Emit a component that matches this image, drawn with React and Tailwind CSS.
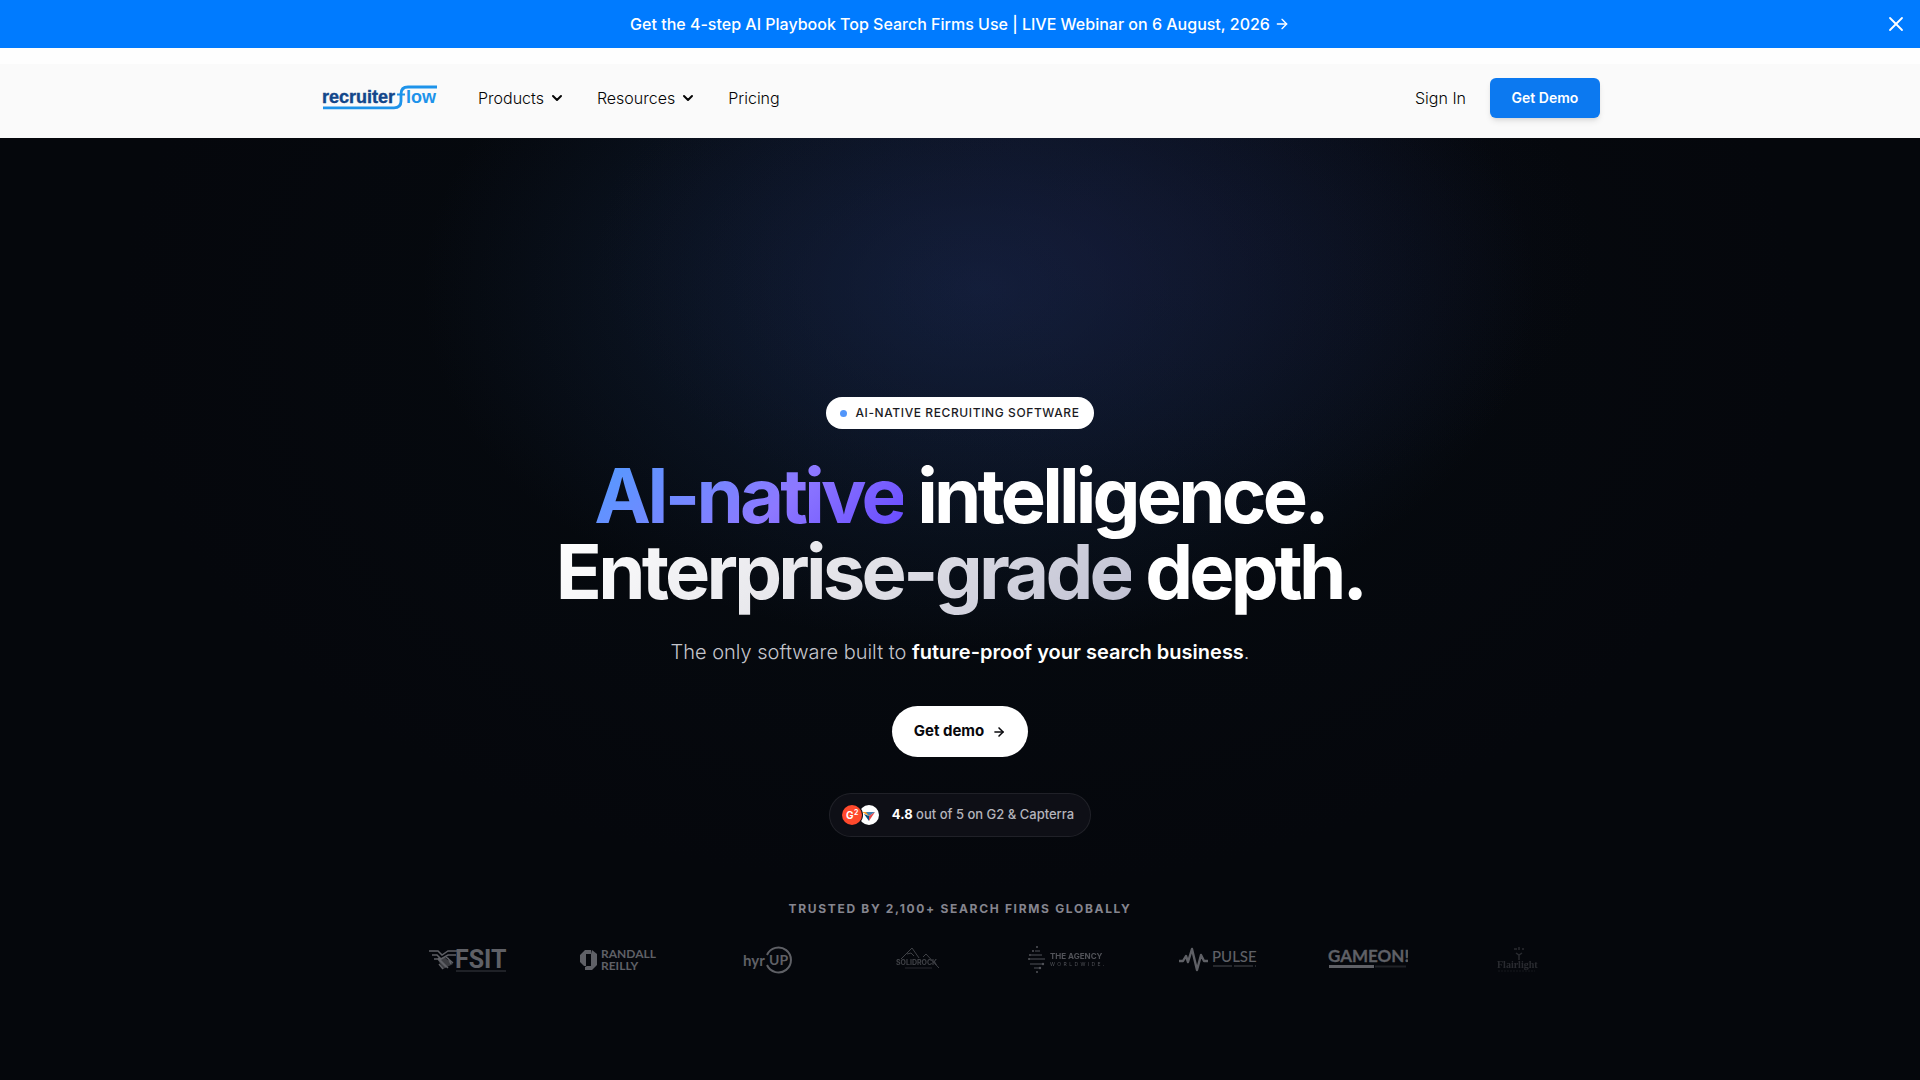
import React from 'react';
import { ArrowRight, ChevronDown, X } from 'lucide-react';

const navItems = [
  { label: 'Products', menu: true },
  { label: 'Resources', menu: true },
  { label: 'Pricing', menu: false },
];

const BrandLogo = () => (
  <svg width="116" height="26" viewBox="0 0 116 26" aria-hidden="true">
    <text x="0" y="18" className="font-['Liberation_Sans',sans-serif] text-[18px] font-bold" fill="#12468a" stroke="#12468a" strokeWidth=".4">recruiter</text>
    <path d="M1 22.800H72Q79 22.800 79 16V9Q79 2 86 2H115" fill="none" stroke="#1d93ea" strokeWidth="2.8" />
    <path d="M75 9.500H83" stroke="#1d93ea" strokeWidth="2" />
    <text x="84" y="18" className="font-['Liberation_Sans',sans-serif] text-[18px] font-bold" fill="#1d93ea">low</text>
  </svg>
);

const FsitLogo = () => (
  <svg width="78" height="28" viewBox="0 0 78 28" fill="currentColor">
    <path d="M0 5H9L13 9L19 5H28M3 9H8L12 13L19 9H27M5 13H9L17 21M9 12L19 22M16 10L24 17M19 12L22 18M10 18L14 23" fill="none" stroke="currentColor" strokeWidth="1.5" />
    <path d="M9 14L15 11L24 18L18 21L14 23Z" opacity=".6" />
    <text x="26" y="22" className="text-[25px] font-bold font-['Roboto',sans-serif]">FSIT</text>
    <path d="M27 25H77" stroke="currentColor" strokeWidth="1" opacity=".6" />
  </svg>
);

const RandallLogo = () => (
  <svg width="78" height="28" viewBox="0 0 78 28" fill="currentColor">
    <path d="M6 4H12V8H7V20H5L1 16V9Z" />
    <path d="M13 4L18 8V19L13 24H6V21L8 20H12V8Z" />
    <text x="22" y="12" className="text-[12px] font-bold font-['Lato',sans-serif]">RANDALL</text>
    <text x="22" y="24" className="text-[12px] font-bold font-['Lato',sans-serif]">REILLY</text>
  </svg>
);

const HyrupLogo = () => (
  <svg width="50" height="28" viewBox="0 0 50 28" fill="currentColor">
    <text x="0" y="20" className="text-[15px] font-bold font-['Lato',sans-serif]">hyr</text>
    <path d="M24 9A12.5 12.5 0 1 1 24 19" fill="none" stroke="currentColor" strokeWidth="2" />
    <text x="26" y="19" className="text-[14px] font-bold font-['Lato',sans-serif]">UP</text>
  </svg>
);

const SolidRockLogo = () => (
  <svg width="44" height="28" viewBox="0 0 44 28" fill="currentColor" opacity=".65">
    <path d="M5 13L16 2L23 12M27 11L30 8L43 22M11 8L15 7L18 10" fill="none" stroke="currentColor" strokeWidth="1" />
    <text x="0" y="19" className="text-[7px] font-bold font-['Inter',sans-serif]">SOLIDROCK</text>
    <path d="M9 22H36" stroke="currentColor" opacity=".6" />
  </svg>
);

const AgencyLogo = () => (
  <svg width="80" height="28" viewBox="0 0 80 28" fill="currentColor" opacity=".85">
    <path d="M7 5H12M3 9H14M1 13H17M2 18H15M6 22H12" stroke="currentColor" strokeWidth="1" />
    <circle cx="9" cy="1" r="1" />
    <circle cx="5" cy="5" r="1" />
    <circle cx="2" cy="9" r="1" />
    <circle cx="1" cy="13" r="1" />
    <circle cx="15" cy="18" r="1.2" />
    <circle cx="12" cy="22" r="1.2" />
    <circle cx="9" cy="26" r="1" />
    <text x="22" y="13" className="text-[8px] font-bold font-['Inter',sans-serif]">THE AGENCY</text>
    <text x="22" y="20" className="text-[5px] tracking-widest font-['Inter',sans-serif]">W O R L D W I D E .</text>
  </svg>
);

const PulseLogo = () => (
  <svg width="78" height="28" viewBox="0 0 78 28" fill="currentColor">
    <path d="M0 15H4L7 10L9 16L13 3L18 24L22 9L25 15H29" fill="none" stroke="currentColor" strokeWidth="2.4" strokeLinejoin="round" />
    <text x="33" y="16" className="text-[15px] font-medium font-['Lato',sans-serif]">PULSE</text>
    <path d="M34 20H77" stroke="currentColor" strokeWidth="1.5" strokeDasharray="19 2" opacity=".5" />
  </svg>
);

const GameonLogo = () => (
  <svg width="80" height="28" viewBox="0 0 80 28" fill="currentColor">
    <text x="0" y="16" className="text-[17px] font-bold font-['Lato',sans-serif]" stroke="currentColor" strokeWidth=".3">GAMEON!</text>
    <path d="M1 20.500H46" stroke="currentColor" strokeWidth="3" />
    <path d="M47 20.500H78" stroke="currentColor" strokeWidth="2" opacity=".3" />
  </svg>
);

const FlairLogo = () => (
  <svg width="42" height="28" viewBox="0 0 42 28" fill="currentColor" opacity=".4">
    <path d="M17 3H20M25 3H27M22 1V4M19 7L22 9L25 7M22 9V14" fill="none" stroke="currentColor" strokeWidth="1.500" />
    <text x="0" y="22" className="text-[10px] font-bold font-['Liberation_Serif',serif]">Flairlight</text>
    <path d="M1 25H38" stroke="currentColor" strokeDasharray="2 1" opacity=".5" />
  </svg>
);

const logos = [
  { name: 'FSIT', mark: <FsitLogo /> },
  { name: 'Randall Reilly', mark: <RandallLogo /> },
  { name: 'hyrUP', mark: <HyrupLogo /> },
  { name: 'Solid Rock', mark: <SolidRockLogo /> },
  { name: 'The Agency Worldwide', mark: <AgencyLogo /> },
  { name: 'Pulse', mark: <PulseLogo /> },
  { name: 'GameOn', mark: <GameonLogo /> },
  { name: 'Flairlight', mark: <FlairLogo /> },
];

const Banner = () => (
  <div className="flex h-12 items-center bg-[#007bff] px-3 text-white">
    <div className="w-6" />
    <a href="#webinar" className="flex flex-1 items-center justify-center gap-1 text-base font-medium">
      Get the 4-step AI Playbook Top Search Firms Use | LIVE Webinar on 6 August, 2026
      <ArrowRight className="size-4" strokeWidth={2} />
    </a>
    <button type="button" aria-label="Close" className="flex size-6 items-center justify-center">
      <X className="size-6" strokeWidth={1.8} />
    </button>
  </div>
);

const Header = () => (
  <header className="bg-[#fafafa] shadow-[inset_0_16px_0_#fefefe]">
    <div className="mx-auto flex h-[90px] max-w-7xl items-center pt-[10px]">
      <a href="#home" aria-label="recruiterflow" className="ml-[2px]">
        <BrandLogo />
      </a>
      <nav className="ml-10 flex items-center gap-8 text-base font-light text-[#050505]">
        {navItems.map((item) =>
          item.menu ? (
            <button key={item.label} type="button" className="flex items-center gap-[5px]">
              {item.label}
              <ChevronDown className="size-4" strokeWidth={3} />
            </button>
          ) : (
            <a key={item.label} href="#pricing">{item.label}</a>
          )
        )}
      </nav>
      <div className="ml-auto flex items-center gap-6">
        <a href="#signin" className="text-base font-light text-[#050505]">Sign In</a>
        <a href="#demo" className="flex h-10 w-[110px] items-center justify-center rounded-md bg-[#0c79f0] text-sm font-semibold text-white shadow-md shadow-black/10">
          Get Demo
        </a>
      </div>
    </div>
  </header>
);

const Rating = () => (
  <div className="mt-9 flex h-11 items-center rounded-full border border-white/8 bg-[#0e0f16] pr-4 pl-3">
    <svg width="38" height="22" viewBox="0 0 38 22" aria-hidden="true">
      <circle cx="27" cy="11" r="10" fill="#fff" />
      <path d="M20 8H27V12Z" fill="#ff9d28" />
      <path d="M24 8H33L27 12Z" fill="#3f7fb0" />
      <path d="M22 10L27 17V12Z" fill="#044d80" />
      <path d="M27 12L33 8L27 17Z" fill="#e54747" />
      <circle cx="10" cy="11" r="11" fill="#0e0f16" />
      <circle cx="10" cy="11" r="10" fill="#ff492c" />
      <text x="4" y="15" className="text-[10px] font-bold" fill="#fff">G</text>
      <text x="12" y="11" className="text-[7px] font-bold" fill="#fff">2</text>
    </svg>
    <p className="ml-3 text-[13px] font-medium text-[#b4b4bb]">
      <strong className="font-bold text-white">4.8</strong> out of 5 on G2 &amp; Capterra
    </p>
  </div>
);

const Hero = () => (
  <main className="flex flex-1 flex-col items-center bg-[#05070c] bg-[radial-gradient(ellipse_26%_30%_at_57%_12%,rgba(28,26,66,0.3),transparent),radial-gradient(ellipse_29%_38%_at_51%_16%,rgba(24,44,82,0.6),transparent),radial-gradient(ellipse_44%_60%_at_50%_20%,rgba(6,14,20,0.6),transparent)] px-6 pt-[259px] pb-24">
    <div className="flex h-8 items-center gap-2 rounded-full bg-white px-[14px] text-xs font-medium tracking-wider text-[#1b1b1f]">
      <span className="size-[7px] rounded-full bg-[#5296fa]" />
      AI-NATIVE RECRUITING SOFTWARE
    </div>
    <h1 className="mt-7 text-center text-[76px] leading-[76px] font-bold tracking-tighter text-white">
      <span className="bg-linear-[135deg,#4f9dff,#8d78ff_60%,#6547ff] bg-clip-text text-transparent">AI-native</span> intelligence.
      <br />
      <span className="bg-linear-[135deg,#ffffff,#e4e4e9_50%,#bfc0d2] bg-clip-text text-transparent">Enterprise-grade</span> depth.
    </h1>
    <p className="mt-[29px] text-center text-xl leading-7 font-light text-[#c4c5cc]">
      The only software built to <strong className="font-semibold text-white">future-proof your search business</strong>.
    </p>
    <a href="#demo" className="mt-10 flex h-[51px] items-center gap-2 rounded-full bg-white px-[22px] text-[15px] font-bold text-[#08080c]">
      Get demo
      <ArrowRight className="size-[14px]" strokeWidth={2.6} />
    </a>
    <Rating />
    <p className="mt-16 text-xs font-bold tracking-[0.14em] text-[#85858f]">TRUSTED BY 2,100+ SEARCH FIRMS GLOBALLY</p>
    <ul className="mt-[29px] grid w-full max-w-[1266px] grid-cols-8 pl-[66px] text-[#5f6066]">
      {logos.map((logo) => (
        <li key={logo.name} aria-label={logo.name} className="flex h-7 items-center justify-center">
          {logo.mark}
        </li>
      ))}
    </ul>
  </main>
);

const App = () => (
  <div className="flex min-h-screen flex-col bg-[#05070c] font-['Inter',sans-serif]">
    <Banner />
    <Header />
    <Hero />
  </div>
);

export default App;
